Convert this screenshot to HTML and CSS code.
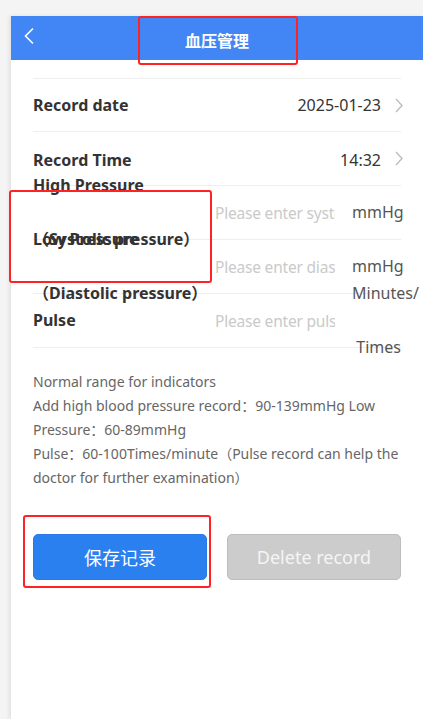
FILE: index.html
```html
<!DOCTYPE html>
<html lang="zh-CN">
<head>
    <meta charset="UTF-8">
    <meta name="viewport" content="width=device-width, initial-scale=1.0">
    <title>血压管理</title>
    <link rel="stylesheet" href="styles.css">
</head>
<body>
    <div class="page">
        <header class="header">
            <a class="back" href="#">
                <svg width="12" height="18" viewBox="0 0 12 18"><path d="M10 1.5 L2.5 9 L10 16.5" fill="none" stroke="#fff" stroke-width="1.6"/></svg>
            </a>
            <h1 class="title">血压管理</h1>
            <span></span>
        </header>

        <section class="content">
            <div class="list">
                <div class="row">
                    <span class="label">Record date</span>
                    <span class="value">2025-01-23</span>
                    <svg class="arrow" width="8" height="15" viewBox="0 0 8 15"><path d="M1 1 L7 7.5 L1 14" fill="none" stroke="#bbb" stroke-width="1.3"/></svg>
                </div>
                <div class="row">
                    <span class="label">Record Time</span>
                    <span class="value">14:32</span>
                    <svg class="arrow" width="8" height="15" viewBox="0 0 8 15"><path d="M1 1 L7 7.5 L1 14" fill="none" stroke="#bbb" stroke-width="1.3"/></svg>
                </div>
                <div class="row">
                    <label class="label" for="high">High Pressure<br><br>（Systolic pressure）</label>
                    <input class="field" type="text" inputmode="numeric" id="high" placeholder="Please enter systolic pressure">
                    <span class="unit">mmHg</span>
                </div>
                <div class="row">
                    <label class="label" for="low">Low Pressure<br><br>（Diastolic pressure）</label>
                    <input class="field" type="text" inputmode="numeric" id="low" placeholder="Please enter diastolic pressure">
                    <span class="unit">mmHg</span>
                </div>
                <div class="row">
                    <label class="label" for="pulse">Pulse</label>
                    <input class="field" type="text" inputmode="numeric" id="pulse" placeholder="Please enter pulse">
                    <span class="unit">Minutes/<br><br>Times</span>
                </div>
            </div>

            <div class="notes">
                <p>Normal range for indicators</p>
                <p>Add high blood pressure record：90-139mmHg Low Pressure：60-89mmHg</p>
                <p>Pulse：60-100Times/minute（Pulse record can help the doctor for further examination）</p>
            </div>

            <div class="actions">
                <button class="btn btn-save" type="button">保存记录</button>
                <button class="btn btn-delete" type="button" disabled>Delete record</button>
            </div>
        </section>
    </div>

    <!-- annotation boxes -->
    <div class="mark mark-title"></div>
    <div class="mark mark-label"></div>
    <div class="mark mark-save"></div>
</body>
</html>
```

FILE: styles.css
```css
body {
    margin: 0;
    padding: 16px 0 0 11px;
    background-color: #f4f4f4;
    font-family: "Noto Sans", "Noto Sans CJK SC", sans-serif;
    overflow: hidden;
}

.page {
    background-color: #fff;
    min-height: 703px;
    box-shadow: -2px 0 4px rgba(0, 0, 0, 0.08);
}

.header {
    display: grid;
    grid-template-columns: 44px 1fr 44px;
    align-items: center;
    height: 44px;
    background-color: #4285f4;
}

.back {
    display: flex;
    justify-content: center;
    padding-top: 2px;
    margin-left: -8px;
    margin-top: -6px;
}

.title {
    margin: 0;
    text-align: center;
    color: #fff;
    font-size: 16px;
    font-weight: bold;
    padding-top: 3px;
}

.content {
    padding: 18px 22px 0;
}

.list {
    border-top: 1px solid #eee;
}

.row {
    display: flex;
    align-items: center;
    height: 54px;
    box-sizing: border-box;
    border-bottom: 1px solid #eee;
    font-size: 16px;
    color: #333;
}

.row:first-child {
    height: 53px;
}

.label {
    flex: none;
    width: 182px;
    font-weight: bold;
    line-height: 27px;
}

.row:nth-child(2) .label,
.row:nth-child(2) .value {
    padding-top: 3px;
}

.value {
    flex: 1;
    text-align: right;
}

.arrow {
    flex: none;
    margin-left: 14px;
    margin-right: -2px;
}

.field {
    width: 120px;
    flex: none;
    border: none;
    outline: none;
    padding: 0;
    background: transparent;
    font-family: inherit;
    font-size: 15.5px;
    letter-spacing: -0.2px;
    color: #333;
}

.field::placeholder {
    color: #cacaca;
}

.unit {
    flex: none;
    width: 49px;
    margin-left: 17px;
    text-align: right;
    line-height: 27px;
    color: #555;
}

.notes {
    margin-top: 22px;
    font-size: 14px;
    line-height: 24px;
    color: #666;
}

.notes p {
    margin: 0;
}

.actions {
    display: flex;
    gap: 20px;
    margin-top: 44px;
}

.btn {
    flex: 1;
    height: 46px;
    border-radius: 5px;
    font-family: inherit;
    font-size: 18px;
    cursor: pointer;
}

.btn-save {
    background-color: #2b80f0;
    border: 1px solid #2a7be6;
    color: #fff;
}

.btn-delete {
    background-color: #cccccc;
    border: 1px solid #bdbdbd;
    color: #f5f5f5;
}

.mark {
    position: absolute;
    box-sizing: border-box;
    border: 2px solid #f22;
    border-radius: 3px;
}

.mark-title {
    left: 138px;
    top: 16px;
    width: 160px;
    height: 49px;
}

.mark-label {
    left: 9px;
    top: 190px;
    width: 203px;
    height: 93px;
}

.mark-save {
    left: 23px;
    top: 515px;
    width: 188px;
    height: 73px;
}
```
